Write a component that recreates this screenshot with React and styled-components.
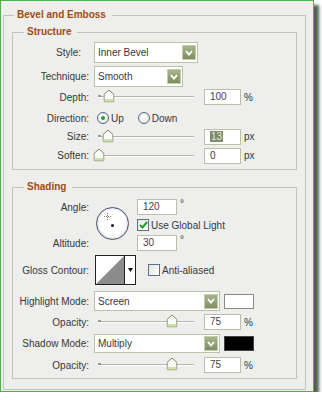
import React from "react";
import styled, { createGlobalStyle } from "styled-components";

const GlobalStyle = createGlobalStyle`
  body {
    margin: 0;
    background: #ffffff;
    font-family: "Liberation Sans", Arial, sans-serif;
    font-size: 10px;
    color: #383838;
  }
`;

const Frame = styled.div`
  box-sizing: border-box;
  width: 314px;
  height: 392px;
  border: 1px solid #4cb04c;
  background: #eeeeec;
  box-shadow: 5px 5px 3px rgba(0, 0, 0, 0.65);
  display: flex;
  flex-direction: column;
`;

const Group = styled.fieldset`
  box-sizing: border-box;
  margin: ${(p) => p.$margin || "0"};
  padding: ${(p) => p.$padding || "0"};
  height: ${(p) => p.$h}px;
  border: 1px solid #c3c3bb;
  min-width: 0;
  display: flex;
  flex-direction: column;
`;

const Legend = styled.legend`
  font-weight: bold;
  font-size: 10px;
  line-height: 12px;
  color: #9e4c12;
  padding: 0 6px 0 3px;
  margin-left: ${(p) => p.$ml}px;
`;

const Row = styled.div`
  display: flex;
  align-items: center;
  height: ${(p) => p.$h}px;
  margin-top: ${(p) => p.$mt || 0}px;
  flex: none;
`;

const Label = styled.div`
  box-sizing: border-box;
  width: 81px;
  padding-right: ${(p) => p.$pr || 5}px;
  text-align: right;
  white-space: nowrap;
  flex: none;
`;

const SelectBox = styled.div`
  box-sizing: border-box;
  width: ${(p) => p.$w}px;
  height: ${(p) => p.$h || 21}px;
  border: 1px solid #bac2a8;
  background: #fff;
  display: flex;
  align-items: center;
  padding-left: 3px;
  padding-right: 1px;
  flex: none;
`;

const SelectText = styled.span`
  flex: 1;
  color: #383838;
`;

const DropButton = styled.div`
  box-sizing: border-box;
  width: 14px;
  height: 15px;
  border: 1px solid #c4ccb0;
  background: linear-gradient(#a8b48c, #7f8f62);
  display: flex;
  align-items: center;
  justify-content: center;
`;

const SliderBox = styled.div`
  position: relative;
  width: 104px;
  height: 100%;
  flex: none;
  display: flex;
  align-items: center;
`;

const Track = styled.div`
  flex: 1;
  margin: 0 4px;
  height: 1px;
  background: #b4b4ad;
  border-bottom: 1px solid #ffffff;
  position: relative;
  &::before {
    content: "";
    position: absolute;
    left: 0;
    top: -1px;
    width: 3px;
    height: 2px;
    background: #9a9a93;
  }
`;

const Thumb = styled.div`
  position: absolute;
  top: 50%;
  width: 11px;
  height: 13px;
  transform: translate(-50%, -58%);
  display: flex;
`;

const Field = styled.div`
  box-sizing: border-box;
  width: ${(p) => p.$w || 37}px;
  height: 16px;
  margin-left: ${(p) => p.$ml ?? 6}px;
  border: 1px solid #b9bfaa;
  background: #fff;
  padding-left: 5px;
  line-height: 14px;
  color: #444;
  flex: none;
`;

const Picked = styled.span`
  background: #7c8b68;
  color: #e6ecd8;
  padding: 0 1px;
`;

const Unit = styled.span`
  margin-left: 3px;
  align-self: ${(p) => (p.$top ? "flex-start" : "center")};
  line-height: ${(p) => (p.$top ? "10px" : "normal")};
`;

const Radio = styled.span`
  box-sizing: border-box;
  width: 12px;
  height: 12px;
  border-radius: 50%;
  border: 1px solid #4f6586;
  background: radial-gradient(circle at 40% 40%, #ffffff, #e4e4dc);
  display: flex;
  align-items: center;
  justify-content: center;
  margin-left: ${(p) => p.$ml}px;
  flex: none;
  &::after {
    content: "";
    display: ${(p) => (p.$on ? "block" : "none")};
    width: 4px;
    height: 4px;
    border-radius: 50%;
    background: #2ca02c;
  }
`;

const OptText = styled.span`
  margin-left: 2px;
`;

const Check = styled.span`
  box-sizing: border-box;
  width: 12px;
  height: 12px;
  border: 1px solid #56708e;
  background: linear-gradient(135deg, #e6e6de, #ffffff);
  margin-left: ${(p) => p.$ml || 0}px;
  display: flex;
  align-items: center;
  justify-content: center;
  flex: none;
`;

const AngleGrid = styled.div`
  display: grid;
  grid-template-columns: 81px 43px auto;
  grid-template-rows: 16px 16px 16px;
  row-gap: 2px;
  margin-top: 6px;
  align-items: center;
  flex: none;
`;

const GridLabel = styled(Label)`
  grid-column: 1;
  grid-row: ${(p) => p.$row};
`;

const Cell = styled.div`
  grid-column: 3;
  grid-row: ${(p) => p.$row};
  display: flex;
  align-items: center;
  height: 100%;
`;

const Dial = styled.div`
  grid-column: 2;
  grid-row: 1 / span 3;
  box-sizing: border-box;
  width: 33px;
  height: 33px;
  margin-left: 2px;
  margin-bottom: 4px;
  border-radius: 50%;
  border: 1.5px solid #46506e;
  background: radial-gradient(circle at 50% 45%, #ffffff 55%, #dcdce4);
  box-shadow: inset 0 0 2px rgba(0, 0, 0, 0.25);
  position: relative;
`;

const DialDot = styled.span`
  position: absolute;
  left: 14px;
  top: 16px;
  width: 3px;
  height: 3px;
  background: #111;
  border-radius: 50%;
`;

const DialCross = styled.svg`
  position: absolute;
  left: 7px;
  top: 5px;
`;

const Contour = styled.div`
  display: flex;
  margin-left: 1px;
  height: 30px;
  flex: none;
`;

const ContourSwatch = styled.div`
  box-sizing: border-box;
  width: 30px;
  height: 30px;
  border: 1px solid #222;
  display: flex;
`;

const ContourArrow = styled.div`
  box-sizing: border-box;
  width: 11px;
  height: 30px;
  border: 1px solid #222;
  border-left: none;
  background: #fff;
  display: flex;
  align-items: center;
  justify-content: center;
`;

const ColorSwatch = styled.div`
  box-sizing: border-box;
  width: 30px;
  height: 15px;
  margin-left: 4px;
  border: 1px solid ${(p) => (p.$color === "#000" ? "#444" : "#8a8a84")};
  background: ${(p) => p.$color};
  flex: none;
`;

const Chevron = () => (
  <svg width="8" height="6" viewBox="0 0 8 6">
    <polyline points="1,1 4,4.5 7,1" fill="none" stroke="#fff" strokeWidth="1.8" />
  </svg>
);

const Select = ({ w, h, children }) => (
  <SelectBox $w={w} $h={h}>
    <SelectText>{children}</SelectText>
    <DropButton>
      <Chevron />
    </DropButton>
  </SelectBox>
);

const Slider = ({ pos }) => (
  <SliderBox>
    <Track />
    <Thumb style={{ left: pos }}>
      <svg width="11" height="13" viewBox="0 0 11 13">
        <path
          d="M5.5 0.6 L10.4 5 V11.4 Q10.4 12.4 9.4 12.4 H1.6 Q0.6 12.4 0.6 11.4 V5 Z"
          fill="#fbfbf7"
          stroke="#7d876a"
        />
        <rect x="1.2" y="9.6" width="8.6" height="2.3" fill="#cfe0a6" />
      </svg>
    </Thumb>
  </SliderBox>
);

const SliderRow = ({ label, pos, value, unit, h = 17, mt }) => (
  <Row $h={h} $mt={mt}>
    <Label>{label}</Label>
    <Slider pos={pos} />
    <Field>{value}</Field>
    <Unit>{unit}</Unit>
  </Row>
);

const Tick = () => (
  <svg width="9" height="8" viewBox="0 0 9 8">
    <polyline points="1,4 3.5,6.5 8,1" fill="none" stroke="#21a121" strokeWidth="2" />
  </svg>
);

export default function App() {
  return (
    <>
      <GlobalStyle />
      <Frame>
        <Group $margin="8px 7px 0 2px" $padding="5px 8px 0 8px" $h={381}>
          <Legend $ml={2}>Bevel and Emboss</Legend>

          <Group $h={144}>
            <Legend $ml={11}>Structure</Legend>
            <Row $h={21} $mt={4}>
              <Label $pr={13}>Style:</Label>
              <Select w={104}>Inner Bevel</Select>
            </Row>
            <Row $h={21} $mt={3}>
              <Label>Technique:</Label>
              <Select w={89}>Smooth</Select>
            </Row>
            <SliderRow label="Depth:" pos={15} value="100" unit="%" h={18} mt={1} />
            <Row $h={20} $mt={2}>
              <Label>Direction:</Label>
              <Radio $on $ml={3} />
              <OptText>Up</OptText>
              <Radio $ml={14} />
              <OptText>Down</OptText>
            </Row>
            <SliderRow label="Size:" pos={14} value={<Picked>13</Picked>} unit="px" />
            <SliderRow label="Soften:" pos={5} value="0" unit="px" mt={2} />
          </Group>

          <Group $margin="11px 0 0 0" $h={198}>
            <Legend $ml={11}>Shading</Legend>
            <AngleGrid>
              <GridLabel $row={1}>Angle:</GridLabel>
              <Dial>
                <DialCross width="7" height="7" viewBox="0 0 7 7">
                  <line x1="3.5" y1="0" x2="3.5" y2="7" stroke="#777" strokeDasharray="1 1" />
                  <line x1="0" y1="3.5" x2="7" y2="3.5" stroke="#777" strokeDasharray="1 1" />
                </DialCross>
                <DialDot />
              </Dial>
              <Cell $row={1}>
                <Field $w={40} $ml={0}>120</Field>
                <Unit $top>°</Unit>
              </Cell>
              <Cell $row={2}>
                <Check>
                  <Tick />
                </Check>
                <OptText>Use Global Light</OptText>
              </Cell>
              <GridLabel $row={3}>Altitude:</GridLabel>
              <Cell $row={3}>
                <Field $w={40} $ml={0}>30</Field>
                <Unit $top>°</Unit>
              </Cell>
            </AngleGrid>

            <Row $h={30} $mt={4}>
              <Label>Gloss Contour:</Label>
              <Contour>
                <ContourSwatch>
                  <svg width="28" height="28" viewBox="0 0 28 28">
                    <rect width="28" height="28" fill="#fff" />
                    <polygon points="0,28 28,0 28,28" fill="#8c8c8c" />
                  </svg>
                </ContourSwatch>
                <ContourArrow>
                  <svg width="5" height="4" viewBox="0 0 5 4">
                    <polygon points="0,0 5,0 2.5,4" fill="#111" />
                  </svg>
                </ContourArrow>
              </Contour>
              <Check $ml={12} />
              <OptText>Anti-aliased</OptText>
            </Row>

            <Row $h={20} $mt={6}>
              <Label>Highlight Mode:</Label>
              <Select w={126} h={20}>Screen</Select>
              <ColorSwatch $color="#fff" />
            </Row>
            <SliderRow label="Opacity:" pos={78} value="75" unit="%" h={16} mt={3} />
            <Row $h={19} $mt={4}>
              <Label>Shadow Mode:</Label>
              <Select w={126} h={19}>Multiply</Select>
              <ColorSwatch $color="#000" />
            </Row>
            <SliderRow label="Opacity:" pos={78} value="75" unit="%" h={16} mt={4} />
          </Group>
        </Group>
      </Frame>
    </>
  );
}
